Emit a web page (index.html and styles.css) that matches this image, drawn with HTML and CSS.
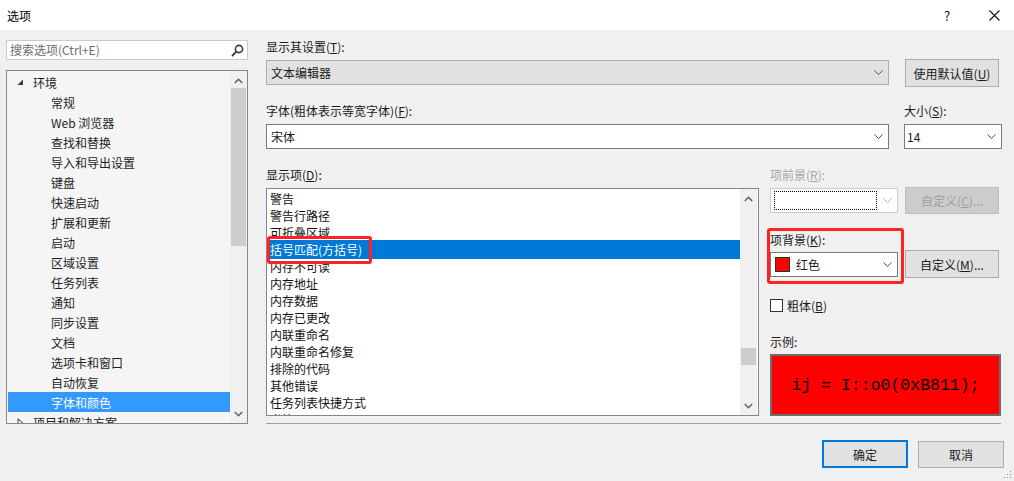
FILE: index.html
```html
<!DOCTYPE html>
<html lang="zh-CN">
<head>
<meta charset="utf-8">
<title>选项</title>
<link rel="stylesheet" href="styles.css">
</head>
<body>
<div class="titlebar">
  <span class="title">选项</span>
  <span class="help">?</span>
  <svg class="close" width="11" height="11" viewBox="0 0 11 11"><path d="M0.5 0.5 L10.5 10.5 M10.5 0.5 L0.5 10.5" stroke="#111" stroke-width="1.1" fill="none"/></svg>
</div>
<div class="body">
  <div class="left">
    <div class="search">
      <span class="placeholder">搜索选项(Ctrl+E)</span>
      <svg class="mag" width="13" height="13" viewBox="0 0 13 13"><circle cx="8" cy="5" r="3.6" stroke="#3c3c3c" stroke-width="1.6" fill="none"/><path d="M5.6 7.4 L1 12" stroke="#3c3c3c" stroke-width="2" fill="none"/></svg>
    </div>
    <div class="tree">
      <div class="tree-items">
        <div class="trow top"><svg class="tri" width="7" height="7" viewBox="0 0 7 7"><polygon points="6,0.5 6,6 0.5,6" fill="#3a3a3a"/></svg>环境</div>
        <div class="trow child">常规</div>
        <div class="trow child">Web 浏览器</div>
        <div class="trow child">查找和替换</div>
        <div class="trow child">导入和导出设置</div>
        <div class="trow child">键盘</div>
        <div class="trow child">快速启动</div>
        <div class="trow child">扩展和更新</div>
        <div class="trow child">启动</div>
        <div class="trow child">区域设置</div>
        <div class="trow child">任务列表</div>
        <div class="trow child">通知</div>
        <div class="trow child">同步设置</div>
        <div class="trow child">文档</div>
        <div class="trow child">选项卡和窗口</div>
        <div class="trow child">自动恢复</div>
        <div class="trow child sel">字体和颜色</div>
        <div class="trow top"><svg class="tri" width="7" height="9" viewBox="0 0 7 9"><polygon points="1,0.8 5.5,4.5 1,8.2" fill="none" stroke="#3a3a3a" stroke-width="1"/></svg>项目和解决方案</div>
      </div>
      <div class="vscroll">
        <svg class="arr" width="9" height="6" viewBox="0 0 9 6"><polyline points="0.8,5 4.5,1.3 8.2,5" fill="none" stroke="#606060" stroke-width="1.5"/></svg>
        <div class="thumb tree-thumb"></div>
        <div class="spacer"></div>
        <svg class="arr" width="9" height="6" viewBox="0 0 9 6"><polyline points="0.8,1 4.5,4.7 8.2,1" fill="none" stroke="#606060" stroke-width="1.5"/></svg>
      </div>
    </div>
  </div>

  <div class="right">
    <div class="label">显示其设置(<u>T</u>):</div>
    <div class="row1">
      <div class="combo gray wide"><span class="ctext">文本编辑器</span><svg class="chev" width="9" height="5" viewBox="0 0 9 5"><polyline points="0.5,0.5 4.5,4.5 8.5,0.5" fill="none" stroke="#505050" stroke-width="1"/></svg></div>
      <div class="btn btn-default">使用默认值(<u>U</u>)</div>
    </div>

    <div class="row2">
      <div class="col-font">
        <div class="label">字体(粗体表示等宽字体)(<u>F</u>):</div>
        <div class="combo white wide"><span class="ctext">宋体</span><svg class="chev" width="9" height="5" viewBox="0 0 9 5"><polyline points="0.5,0.5 4.5,4.5 8.5,0.5" fill="none" stroke="#505050" stroke-width="1"/></svg></div>
      </div>
      <div class="col-size">
        <div class="label">大小(<u>S</u>):</div>
        <div class="combo white size"><span class="ctext">14</span><svg class="chev" width="9" height="5" viewBox="0 0 9 5"><polyline points="0.5,0.5 4.5,4.5 8.5,0.5" fill="none" stroke="#505050" stroke-width="1"/></svg></div>
      </div>
    </div>

    <div class="row3">
      <div class="col-list">
        <div class="label">显示项(<u>D</u>):</div>
        <div class="listbox">
          <div class="list-items">
            <div class="lrow">警告</div>
            <div class="lrow">警告行路径</div>
            <div class="lrow">可折叠区域</div>
            <div class="lrow lsel">括号匹配(方括号)</div>
            <div class="lrow">内存不可读</div>
            <div class="lrow">内存地址</div>
            <div class="lrow">内存数据</div>
            <div class="lrow">内存已更改</div>
            <div class="lrow">内联重命名</div>
            <div class="lrow">内联重命名修复</div>
            <div class="lrow">排除的代码</div>
            <div class="lrow">其他错误</div>
            <div class="lrow">任务列表快捷方式</div>
            <div class="lrow">书签</div>
          </div>
          <div class="vscroll list-scroll">
            <svg class="arr" width="9" height="6" viewBox="0 0 9 6"><polyline points="0.8,5 4.5,1.3 8.2,5" fill="none" stroke="#606060" stroke-width="1.5"/></svg>
            <div class="spacer s1"></div>
            <div class="thumb list-thumb"></div>
            <div class="spacer"></div>
            <svg class="arr" width="9" height="6" viewBox="0 0 9 6"><polyline points="0.8,1 4.5,4.7 8.2,1" fill="none" stroke="#606060" stroke-width="1.5"/></svg>
          </div>
          <div class="mark mark-list"></div>
        </div>
      </div>

      <div class="col-panel">
        <div class="label disabled">项前景(<u>R</u>):</div>
        <div class="prow prow1">
          <div class="combo dis small"><span class="focus"></span><svg class="chev" width="9" height="5" viewBox="0 0 9 5"><polyline points="0.5,0.5 4.5,4.5 8.5,0.5" fill="none" stroke="#b0b0b0" stroke-width="1"/></svg></div>
          <div class="btn btn-dis">自定义(<u>C</u>)...</div>
        </div>
        <div class="label lbl-bg">项背景(<u>K</u>):</div>
        <div class="prow prow2">
          <div class="combo white small"><span class="swatch"></span><span class="ctext">红色</span><svg class="chev" width="9" height="5" viewBox="0 0 9 5"><polyline points="0.5,0.5 4.5,4.5 8.5,0.5" fill="none" stroke="#505050" stroke-width="1"/></svg></div>
          <div class="btn btn-custom">自定义(<u>M</u>)...</div>
        </div>
        <div class="check-row"><span class="checkbox"></span><span>粗体(<u>B</u>)</span></div>
        <div class="label lbl-sample">示例:</div>
        <div class="sample">ij = I::o0(0xB811);</div>
        <div class="mark mark-bg"></div>
      </div>
    </div>

    <div class="sep"></div>
    <div class="footer">
      <div class="btn btn-ok">确定</div>
      <div class="btn btn-cancel">取消</div>
    </div>
  </div>
</div>
<svg class="grip" width="8" height="8" viewBox="0 0 8 8"><rect x="6" y="0" width="1" height="1" fill="#8a8a8a"/><rect x="3" y="3" width="1" height="1" fill="#8a8a8a"/><rect x="6" y="3" width="1" height="1" fill="#8a8a8a"/><rect x="0" y="6" width="1" height="1" fill="#8a8a8a"/><rect x="3" y="6" width="1" height="1" fill="#8a8a8a"/><rect x="6" y="6" width="1" height="1" fill="#8a8a8a"/></svg>
</body>
</html>
```

FILE: styles.css
```css
* { box-sizing: border-box; }
html, body { margin: 0; padding: 0; }
body {
  width: 1014px;
  height: 481px;
  background: #f0f0f0;
  font-family: "Noto Sans CJK SC", "Microsoft YaHei", sans-serif;
  font-size: 12px;
  color: #1a1a1a;
  overflow: hidden;
  position: relative;
}
u { text-decoration: underline; text-underline-offset: 1px; }

.titlebar {
  height: 30px;
  background: #ffffff;
  display: flex;
  align-items: center;
  padding-left: 7px;
  padding-right: 14px;
}
.title { flex: 1; font-size: 12px; color: #000; }
.help { width: 16px; text-align: center; font-size: 13px; color: #111; margin-right: 34px; }
.close { display: block; }

.body {
  display: flex;
  height: 451px;
  padding-top: 9px;
}
.left {
  width: 242px;
  margin-left: 6px;
  padding-top: 1px;
}
.search {
  height: 20px;
  background: #fff;
  border: 1px solid #c8cad4;
  display: flex;
  align-items: center;
  padding-left: 3px;
  padding-right: 3px;
}
.placeholder { flex: 1; color: #6d6d6d; font-size: 12px; line-height: 16px; }
.mag { display: block; }

.tree {
  margin-top: 10px;
  height: 354px;
  border: 1px solid #828790;
  background: #f5f5f5;
  display: flex;
}
.tree-items {
  width: 223px;
  padding-left: 1px;
  padding-top: 1px;
  overflow: hidden;
}
.trow {
  height: 20px;
  display: flex;
  align-items: center;
  white-space: nowrap;
  color: #1e1e1e;
}
.trow.top { padding-left: 9px; }
.trow.top .tri { width: 7px; margin-right: 9px; }
.trow.child { padding-left: 43px; }
.trow.sel { background: #3399ff; color: #fff; }

.vscroll {
  width: 17px;
  background: #f0f0f0;
  display: flex;
  flex-direction: column;
  align-items: center;
}
.vscroll .arr { display: block; margin-top: 7px; flex: none; }
.vscroll .arr:last-child { margin-top: 0; margin-bottom: 6px; }
.thumb { width: 15px; background: #cdcdcd; flex: none; }
.tree-thumb { margin-top: 4px; height: 158px; }
.spacer { flex: 1; }

.right {
  width: 738px;
  margin-left: 18px;
}
.label { height: 16px; line-height: 16px; white-space: nowrap; color: #1a1a1a; }
.label.disabled { color: #a6a6a6; }

.row1 { display: flex; align-items: flex-start; margin-top: 4px; }
.combo {
  height: 25px;
  display: flex;
  align-items: center;
  padding-left: 4px;
  padding-right: 5px;
}
.combo .ctext { flex: 1; white-space: nowrap; }
.combo .chev { display: block; flex: none; }
.combo.gray { background: #e1e1e1; border: 1px solid #adadad; }
.combo.white { background: #fff; border: 1px solid #7a7a7a; }
.combo.dis { background: #fff; border: 1px solid #cccccc; padding-left: 3px; }
.combo.wide { width: 623px; }
.row1 .combo { margin-top: 1px; }
.btn {
  display: flex;
  align-items: center;
  justify-content: center;
  white-space: nowrap;
  background: #e1e1e1;
  border: 1px solid #adadad;
  color: #1a1a1a;
}
.btn-default { width: 94px; height: 28px; margin-left: 16px; }

.row2 { display: flex; margin-top: 16px; }
.row2 .combo { margin-top: 5px; }
.col-size { margin-left: 15px; }
.combo.size { width: 98px; padding-left: 2px; }

.row3 { display: flex; margin-top: 18px; }
.col-list { width: 493px; }
.listbox {
  position: relative;
  margin-top: 5px;
  height: 228px;
  border: 1px solid #828790;
  background: #fff;
  display: flex;
}
.list-items {
  width: 473px;
  padding-top: 1px;
  overflow: hidden;
}
.lrow {
  height: 17px;
  line-height: 17px;
  padding-left: 3px;
  white-space: nowrap;
  color: #111;
}
.lrow.lsel {
  position: relative;
  background: #0078d7;
  color: #fff;
  height: 19px;
  line-height: 19px;
  margin-top: -1px;
  margin-bottom: -1px;
}
.list-scroll { background: #f0f0f0; }
.list-scroll .s1 { height: 146px; flex: none; }
.list-thumb { height: 17px; }

.mark {
  position: absolute;
  border: 3px solid #ff2222;
  border-radius: 3px;
  pointer-events: none;
}
.mark-list { left: 0px; top: 47px; width: 105px; height: 28px; }

.col-panel {
  position: relative;
  margin-left: 11px;
  width: 234px;
}
.prow { display: flex; align-items: flex-start; }
.combo.small { width: 128px; }
.prow1 { margin-top: 4px; }
.prow1 .combo { margin-top: 1px; }
.focus {
  flex: 1;
  height: 19px;
  border: 1px dotted #000;
  margin-right: 6px;
}
.btn-dis {
  width: 94px;
  height: 27px;
  margin-left: 7px;
  background: #cccccc;
  border-color: #bfbfbf;
  color: #a0a0a0;
}
.lbl-bg { margin-top: 18px; }
.prow2 { margin-top: 2px; }
.prow2 .combo { margin-top: 2px; }
.swatch {
  width: 15px;
  height: 15px;
  background: #ff0000;
  border: 1px solid #303030;
  margin-right: 6px;
  flex: none;
}
.btn-custom { width: 94px; height: 28px; margin-left: 7px; }

.check-row {
  display: flex;
  align-items: center;
  margin-top: 20px;
  height: 14px;
}
.checkbox {
  width: 13px;
  height: 13px;
  background: #fff;
  border: 1px solid #333;
  margin-right: 4px;
}
.lbl-sample { margin-top: 22px; }
.sample {
  margin-top: 4px;
  width: 231px;
  height: 62px;
  background: #ff0000;
  border: 2px solid #6d6d6d;
  display: flex;
  align-items: center;
  justify-content: center;
  font-family: "Liberation Mono", "DejaVu Sans Mono", monospace;
  font-size: 16.5px;
  color: #000;
  white-space: pre;
}
.mark-bg { left: -3px; top: 61px; width: 137px; height: 56px; }

.sep {
  margin-top: 7px;
  width: 735px;
  height: 1px;
  background: #a0a0a0;
}
.footer {
  display: flex;
  justify-content: flex-end;
  margin-top: 16px;
}
.btn-ok {
  width: 86px;
  height: 28px;
  border: 2px solid #0078d7;
}
.btn-cancel {
  width: 86px;
  height: 27px;
  margin-left: 10px;
  margin-top: 1px;
}
.grip { position: absolute; right: 2px; bottom: 2px; }
```
